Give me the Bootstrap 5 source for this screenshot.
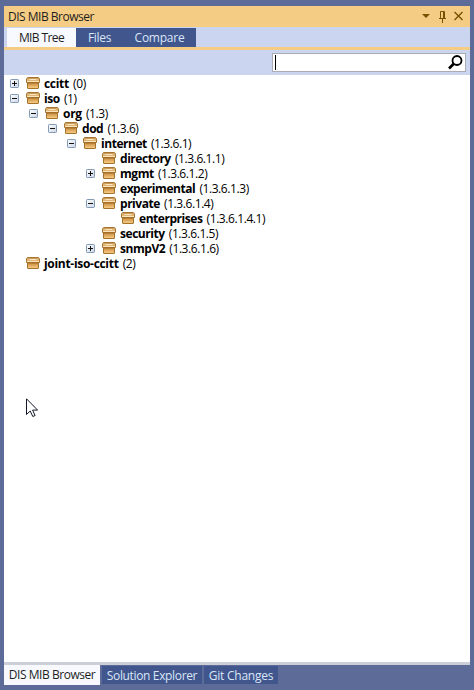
<!DOCTYPE html>
<html lang="en">
<head>
<meta charset="utf-8">
<meta name="viewport" content="width=device-width, initial-scale=1">
<title>DIS MIB Browser</title>
<link href="https://cdn.jsdelivr.net/npm/bootstrap@5.3.0/dist/css/bootstrap.min.css" rel="stylesheet">
<style>
body{background:#5d6b99;font:12px/15px "Open Sans","Noto Sans",sans-serif;color:#1e1e1e;padding:6px 4px 0;height:690px;overflow:hidden}
svg{display:block;flex:none}
.titlebar{height:21px;background:#f5cc84;padding:0 6px 0 4px}
.tool-tabs{height:23px;background:#ccd5f0;border-bottom:3px solid #f5cc84;padding:1px 0 0 3px}
.tool-tabs .nav-link,.dock-tabs .nav-link{color:#dbe5f8;background:#40568d;border-radius:0;padding:0;text-align:center;white-space:nowrap}
.tool-tabs .nav-link{height:19px;line-height:19px}
.tool-tabs .nav-link.active,.dock-tabs .nav-link.active{background:#f7f9fe;color:#1e1e1e}
.searchbar{height:25px;background:#ccd5f0;padding:3px 4px 0}
.searchbox{width:194px;height:19px;background:#fff;border:1px solid #a9acb5;padding:0 2px}
.caret{width:1px;height:15px;background:#000}
.tree{height:587px;background:#fff;padding:1px 0 0 6px;color:#000}
.tree ul{padding-left:19px}
.node{height:15px;white-space:nowrap}
.node b{font-weight:700;letter-spacing:-.46px;margin-left:4px}
.node b.wide{letter-spacing:-.3px}
.node i{font-style:normal;letter-spacing:-.42px;margin-left:4.200px}
.gap-slot{width:9px}
.node .crate{margin-left:7px}
.dock-tabs{border-top:3px solid #ccced8;height:28px}
.dock-tabs .nav-link{height:18px;line-height:19px;margin:1px 2px 0 0}
.dock-tabs .nav-link.active{height:20px;line-height:20px;margin-top:0}
.tool-tabs .w-tree{width:69px;letter-spacing:-.6px}
.tool-tabs .w-files{width:47px;letter-spacing:-.3px}
.tool-tabs .w-compare{width:73px;letter-spacing:-.25px}
.dock-tabs .w-dis{width:96px;letter-spacing:-.45px}
.dock-tabs .w-sol{width:100px;letter-spacing:-.35px}
.dock-tabs .w-git{width:74px;letter-spacing:-.25px}
.caption-text{letter-spacing:-.5px}
.cursor{left:26px;top:398px}
</style>
<script src="https://cdn.jsdelivr.net/npm/bootstrap@5.3.0/dist/js/bootstrap.bundle.min.js"></script>
</head>
<body>
<svg width="0" height="0" class="position-absolute" aria-hidden="true">
<defs>
<linearGradient id="body" x2="0" y2="1"><stop stop-color="#c98d40"/><stop offset="1" stop-color="#fbcf88"/></linearGradient>
<linearGradient id="btn" x2="1" y2="1"><stop stop-color="#fff"/><stop offset="1" stop-color="#cbd6e5"/></linearGradient>
<symbol id="crate" viewBox="0 0 14 13">
<path d="M1.500 6h11v5q0 .5-.5.5H2q-.5 0-.5-.5z" fill="url(#body)" stroke="#a3722b"/>
<path d="M1.500.5h11l1 1.500v3.500H.5V2z" fill="#dfb676" stroke="#a87532"/>
<path d="M2.500 1.500h9" stroke="#c99a57"/><path d="M3.500 2.500h7" stroke="#fae7c2"/><path d="M1 4.500h12" stroke="#fbe6bd"/><path d="M1.500 5.500h11" stroke="#a56f2a"/>
</symbol>
<symbol id="minus" viewBox="0 0 9 9"><rect x=".5" y=".5" width="8" height="8" rx=".7" fill="url(#btn)" stroke="#839ab6"/><path d="M2 4.500h5" stroke="#111"/></symbol>
<symbol id="plus" viewBox="0 0 9 9"><use href="#minus"/><path d="M4.500 2v5" stroke="#111"/></symbol>
</defs>
</svg>
<header class="titlebar d-flex align-items-center">
<span class="caption-text me-auto">DIS MIB Browser</span>
<svg width="42" height="13" viewBox="0 0 42 13"><path d="M0 4h8L4 8z" fill="#795200"/><g fill="none" stroke="#795200"><path d="M18.500 8V1.500h4V8M21.500 1.500V8M17 8.500h7M20.500 9v4"/><path d="M32.500 2l8 8M40.500 2l-8 8" stroke-width="1.400"/></g></svg>
</header>
<nav class="nav tool-tabs">
<a class="nav-link active w-tree">MIB Tree</a><a class="nav-link w-files">Files</a><a class="nav-link w-compare">Compare</a>
</nav>
<div class="searchbar d-flex justify-content-end">
<div class="searchbox d-flex align-items-center justify-content-between"><span class="caret"></span>
<svg width="15" height="15" viewBox="0 0 15 15" fill="none" stroke="#000"><circle cx="9" cy="5.500" r="4.500" stroke-width="1.800"/><path d="M6 8.500l-5 5" stroke-width="2.600"/></svg></div>
</div>
<main class="tree">
<div class="node d-flex align-items-center"><svg width="9" height="9"><use href="#plus"/></svg><svg class="crate" width="14" height="13"><use href="#crate"/></svg><b class="wide">ccitt</b><i>(0)</i></div>
<div class="node d-flex align-items-center"><svg width="9" height="9"><use href="#minus"/></svg><svg class="crate" width="14" height="13"><use href="#crate"/></svg><b>iso</b><i>(1)</i></div>
<ul class="list-unstyled mb-0"><li>
<div class="node d-flex align-items-center"><svg width="9" height="9"><use href="#minus"/></svg><svg class="crate" width="14" height="13"><use href="#crate"/></svg><b class="wide">org</b><i>(1.3)</i></div>
<ul class="list-unstyled mb-0"><li>
<div class="node d-flex align-items-center"><svg width="9" height="9"><use href="#minus"/></svg><svg class="crate" width="14" height="13"><use href="#crate"/></svg><b>dod</b><i>(1.3.6)</i></div>
<ul class="list-unstyled mb-0"><li>
<div class="node d-flex align-items-center"><svg width="9" height="9"><use href="#minus"/></svg><svg class="crate" width="14" height="13"><use href="#crate"/></svg><b>internet</b><i>(1.3.6.1)</i></div>
<ul class="list-unstyled mb-0">
<li class="node d-flex align-items-center"><span class="gap-slot"></span><svg class="crate" width="14" height="13"><use href="#crate"/></svg><b>directory</b><i>(1.3.6.1.1)</i></li>
<li class="node d-flex align-items-center"><svg width="9" height="9"><use href="#plus"/></svg><svg class="crate" width="14" height="13"><use href="#crate"/></svg><b>mgmt</b><i>(1.3.6.1.2)</i></li>
<li class="node d-flex align-items-center"><span class="gap-slot"></span><svg class="crate" width="14" height="13"><use href="#crate"/></svg><b>experimental</b><i>(1.3.6.1.3)</i></li>
<li><div class="node d-flex align-items-center"><svg width="9" height="9"><use href="#minus"/></svg><svg class="crate" width="14" height="13"><use href="#crate"/></svg><b>private</b><i>(1.3.6.1.4)</i></div>
<ul class="list-unstyled mb-0"><li class="node d-flex align-items-center"><span class="gap-slot"></span><svg class="crate" width="14" height="13"><use href="#crate"/></svg><b>enterprises</b><i>(1.3.6.1.4.1)</i></li></ul></li>
<li class="node d-flex align-items-center"><span class="gap-slot"></span><svg class="crate" width="14" height="13"><use href="#crate"/></svg><b>security</b><i>(1.3.6.1.5)</i></li>
<li class="node d-flex align-items-center"><svg width="9" height="9"><use href="#plus"/></svg><svg class="crate" width="14" height="13"><use href="#crate"/></svg><b>snmpV2</b><i>(1.3.6.1.6)</i></li>
</ul></li></ul></li></ul></li></ul>
<div class="node d-flex align-items-center"><span class="gap-slot"></span><svg class="crate" width="14" height="13"><use href="#crate"/></svg><b class="wide">joint-iso-ccitt</b><i>(2)</i></div>
</main>
<nav class="nav dock-tabs flex-nowrap">
<a class="nav-link active w-dis">DIS MIB Browser</a><a class="nav-link w-sol">Solution Explorer</a><a class="nav-link w-git">Git Changes</a>
</nav>
<svg class="cursor position-absolute" width="13" height="20" viewBox="0 0 13 20"><path d="M.5.8v15.700l3.700-3.500 2.600 5.500 2.300-1-2.500-5.400h5z" fill="#fff" stroke="#111827"/></svg>
</body>
</html>
